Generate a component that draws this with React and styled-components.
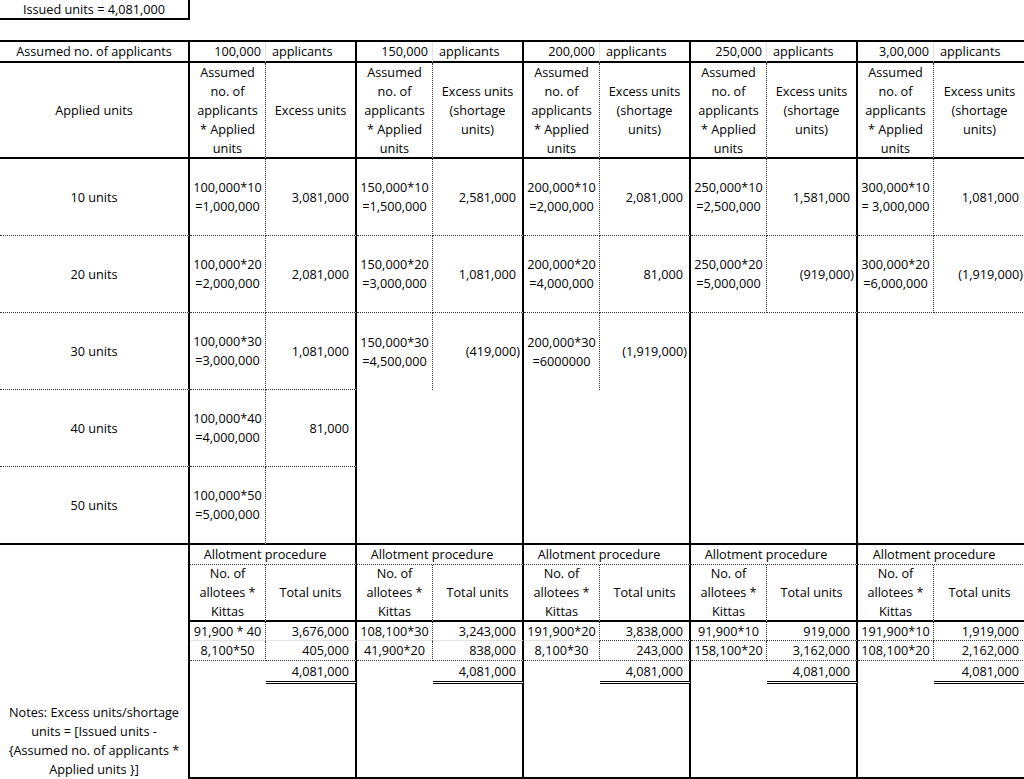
import React from 'react';
import styled, { createGlobalStyle } from 'styled-components';

const GlobalStyle = createGlobalStyle`
  html, body {
    margin: 0;
    padding: 0;
    background: #fff;
  }
  body {
    font-family: "Open Sans", "Liberation Sans", sans-serif;
    font-size: 12.7px;
    color: #000;
  }
`;

const line = v => {
  if (v === 'thick') return '2px solid #000';
  if (v === 'dot') return '1px dotted #333';
  if (v === 'faint') return '1px solid #e2e2e2';
  if (v === 'double') return '3px double #000';
  return 'none';
};

const hAlign = { left: 'flex-start', center: 'center', right: 'flex-end' };
const vAlign = { start: 'flex-start', center: 'center', end: 'flex-end' };

const Sheet = styled.div`
  width: 1024px;
  height: 779px;
  overflow: hidden;
`;

const IssuedBox = styled.div`
  box-sizing: border-box;
  width: 190px;
  height: 20px;
  margin-bottom: 20px;
  border-right: 2px solid #000;
  border-bottom: 2px solid #000;
  line-height: 18px;
  text-align: center;
`;

const Grid = styled.div`
  display: grid;
  grid-template-columns: 190px repeat(5, 76px 91px);
  grid-template-rows: 21px 96px 77px 77px 77px 77px 78px 20px 57px 19px 20px 23px 95px;
  border-top: 2px solid #000;
`;

const Cell = styled.div`
  box-sizing: border-box;
  display: flex;
  flex-direction: column;
  justify-content: ${p => vAlign[p.$v || 'center']};
  align-items: ${p => hAlign[p.$align || 'center']};
  text-align: ${p => p.$align || 'center'};
  padding: 0 ${p => (p.$pr ?? 3)}px 0 ${p => (p.$pl ?? 3)}px;
  border-right: ${p => line(p.$right)};
  border-bottom: ${p => line(p.$bottom)};
  grid-column: ${p => (p.$span ? `span ${p.$span}` : 'auto')};
  grid-row: ${p => (p.$rows ? `span ${p.$rows}` : 'auto')};
  line-height: 19px;
  white-space: nowrap;
  min-width: 0;
`;

const Lines = ({ items }) => items.map((t, i) => <span key={i}>{t}</span>);

const groups = [
  {
    n: '100,000',
    excess: ['Excess units'],
    rows: [
      ['100,000*10', '=1,000,000', '3,081,000'],
      ['100,000*20', '=2,000,000', '2,081,000'],
      ['100,000*30', '=3,000,000', '1,081,000'],
      ['100,000*40', '=4,000,000', '81,000'],
      ['100,000*50', '=5,000,000', ''],
    ],
    allot: [['91,900 * 40', '3,676,000'], ['8,100*50', '405,000']],
  },
  {
    n: '150,000',
    excess: ['Excess units', '(shortage', 'units)'],
    rows: [
      ['150,000*10', '=1,500,000', '2,581,000'],
      ['150,000*20', '=3,000,000', '1,081,000'],
      ['150,000*30', '=4,500,000', '(419,000)'],
    ],
    allot: [['108,100*30', '3,243,000'], ['41,900*20', '838,000']],
  },
  {
    n: '200,000',
    excess: ['Excess units', '(shortage', 'units)'],
    rows: [
      ['200,000*10', '=2,000,000', '2,081,000'],
      ['200,000*20', '=4,000,000', '81,000'],
      ['200,000*30', '=6000000', '(1,919,000)'],
    ],
    allot: [['191,900*20', '3,838,000'], ['8,100*30', '243,000']],
  },
  {
    n: '250,000',
    excess: ['Excess units', '(shortage', 'units)'],
    rows: [
      ['250,000*10', '=2,500,000', '1,581,000'],
      ['250,000*20', '=5,000,000', '(919,000)'],
    ],
    allot: [['91,900*10', '919,000'], ['158,100*20', '3,162,000']],
  },
  {
    n: '3,00,000',
    excess: ['Excess units', '(shortage', 'units)'],
    rows: [
      ['300,000*10', '= 3,000,000', '1,081,000'],
      ['300,000*20', '=6,000,000', '(1,919,000)'],
    ],
    allot: [['191,900*10', '1,919,000'], ['108,100*20', '2,162,000']],
  },
];

const appliedRows = ['10 units', '20 units', '30 units', '40 units', '50 units'];

// group separator: thick everywhere except the last group at the page edge
const sep = gi => (gi < groups.length - 1 ? 'thick' : undefined);

const App = () => {
  const cells = [];

  // row: assumed no. of applicants
  cells.push(<Cell key="h1" $right="thick" $bottom="thick">Assumed no. of applicants</Cell>);
  groups.forEach((g, gi) => {
    cells.push(<Cell key={`h1a${gi}`} $align="right" $pr={4} $right="faint" $bottom="thick">{g.n}</Cell>);
    cells.push(<Cell key={`h1b${gi}`} $align="left" $pl={6} $right={sep(gi)} $bottom="thick">applicants</Cell>);
  });

  // row: column headers
  cells.push(<Cell key="h2" $right="thick" $bottom="thick">Applied units</Cell>);
  groups.forEach((g, gi) => {
    cells.push(
      <Cell key={`h2a${gi}`} $right="dot" $bottom="thick">
        <Lines items={['Assumed', 'no. of', 'applicants', '* Applied', 'units']} />
      </Cell>
    );
    cells.push(
      <Cell key={`h2b${gi}`} $right={sep(gi)} $bottom="thick">
        <Lines items={g.excess} />
      </Cell>
    );
  });

  // rows: applied units
  appliedRows.forEach((label, i) => {
    const last = i === appliedRows.length - 1;
    cells.push(<Cell key={`r${i}`} $right="thick" $bottom={last ? 'thick' : 'dot'}>{label}</Cell>);
    groups.forEach((g, gi) => {
      const row = g.rows[i];
      const bottom = last ? 'thick' : i < 2 || g.rows[i + 1] ? 'dot' : undefined;
      const neg = row && row[2].startsWith('(');
      cells.push(
        <Cell key={`r${i}a${gi}`} $right={row ? 'dot' : undefined} $bottom={bottom}>
          {row && <Lines items={[row[0], row[1]]} />}
        </Cell>
      );
      cells.push(
        <Cell key={`r${i}b${gi}`} $align="right" $pr={neg ? 2 : 6} $right={sep(gi)} $bottom={bottom}>
          {row ? row[2] : ''}
        </Cell>
      );
    });
  });

  // allotment section
  cells.push(
    <Cell key="notes" $rows={6} $v="end" $right="thick">
      <Lines items={['Notes: Excess units/shortage', 'units = [Issued units -', '{Assumed no. of applicants *', 'Applied units }]']} />
    </Cell>
  );
  groups.forEach((g, gi) => {
    cells.push(
      <Cell key={`aa${gi}`} $span={2} $pl={2} $pr={17} $right={sep(gi)} $bottom="dot">Allotment procedure</Cell>
    );
  });
  groups.forEach((g, gi) => {
    cells.push(
      <Cell key={`ab${gi}`} $right="dot" $bottom="thick">
        <Lines items={['No. of', 'allotees *', 'Kittas']} />
      </Cell>
    );
    cells.push(<Cell key={`ab2${gi}`} $right={sep(gi)} $bottom="thick">Total units</Cell>);
  });
  groups.forEach((g, gi) => {
    cells.push(<Cell key={`ac${gi}`} $right="dot" $bottom={gi >= 3 ? 'dot' : 'faint'}>{g.allot[0][0]}</Cell>);
    cells.push(
      <Cell key={`ac2${gi}`} $align="right" $pr={6} $right={sep(gi)} $bottom={gi >= 2 ? 'dot' : 'faint'}>
        {g.allot[0][1]}
      </Cell>
    );
  });
  groups.forEach((g, gi) => {
    cells.push(<Cell key={`ad${gi}`} $right="dot" $bottom="dot">{g.allot[1][0]}</Cell>);
    cells.push(
      <Cell key={`ad2${gi}`} $align="right" $pr={6} $right={sep(gi)} $bottom="dot">{g.allot[1][1]}</Cell>
    );
  });
  groups.forEach((g, gi) => {
    cells.push(<Cell key={`ae${gi}`} />);
    cells.push(
      <Cell key={`ae2${gi}`} $align="right" $pr={6} $right={sep(gi)} $bottom="double">4,081,000</Cell>
    );
  });
  groups.forEach((g, gi) => {
    cells.push(<Cell key={`af${gi}`} $bottom="thick" />);
    cells.push(<Cell key={`af2${gi}`} $right={sep(gi)} $bottom="thick" />);
  });

  return (
    <Sheet>
      <GlobalStyle />
      <IssuedBox>Issued units = 4,081,000</IssuedBox>
      <Grid>{cells}</Grid>
    </Sheet>
  );
};

export default App;
